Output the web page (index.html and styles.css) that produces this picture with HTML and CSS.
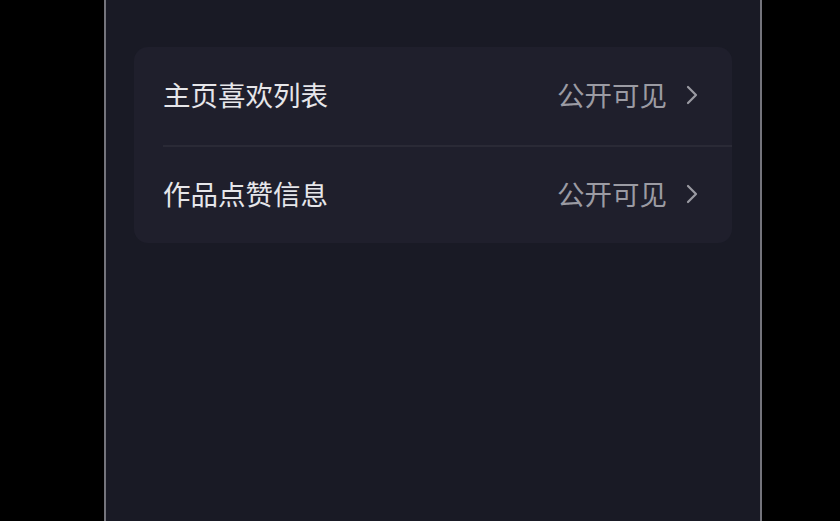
FILE: index.html
```html
<!DOCTYPE html>
<html lang="zh-CN">
<head>
    <meta charset="UTF-8">
    <meta name="viewport" content="width=device-width, initial-scale=1.0">
    <title>隐私设置</title>
    <link rel="stylesheet" href="styles.css">
</head>
<body>
    <div class="screen">
        <div class="card">
            <div class="row">
                <span class="row-title">主页喜欢列表</span>
                <span class="row-value">公开可见</span>
                <svg class="chevron" viewBox="0 0 12 20" width="12" height="20">
                    <polyline points="2,2 10,10 2,18" fill="none" stroke="currentColor" stroke-width="2.2" stroke-linecap="round" stroke-linejoin="round"/>
                </svg>
            </div>
            <div class="row">
                <span class="row-title">作品点赞信息</span>
                <span class="row-value">公开可见</span>
                <svg class="chevron" viewBox="0 0 12 20" width="12" height="20">
                    <polyline points="2,2 10,10 2,18" fill="none" stroke="currentColor" stroke-width="2.2" stroke-linecap="round" stroke-linejoin="round"/>
                </svg>
            </div>
        </div>
    </div>
</body>
</html>
```

FILE: styles.css
```css
html, body {
    margin: 0;
    padding: 0;
    height: 100%;
    background-color: #000;
    font-family: "Noto Sans CJK SC", "Noto Sans", sans-serif;
}
.screen {
    margin-left: 104px;
    width: 658px;
    height: 100%;
    box-sizing: border-box;
    border-left: 2px solid #74747c;
    border-right: 2px solid #74747c;
    background-color: #191a25;
    padding: 47px 28px 0;
}
.card {
    background-color: #1f1f2c;
    border-radius: 14px;
    padding-left: 29px;
}
.row {
    display: flex;
    align-items: center;
    height: 98px;
    padding-right: 34px;
    box-sizing: border-box;
    padding-bottom: 4px;
}
.row + .row {
    border-top: 2px solid #2a2a36;
}
.row-title {
    flex: 1;
    font-size: 27.5px;
    color: #e6e6ea;
}
.row-value {
    font-size: 27.5px;
    color: #9b9ba3;
}
.chevron {
    margin-left: 19px;
    margin-top: 2px;
    color: #9b9ba3;
}
```
